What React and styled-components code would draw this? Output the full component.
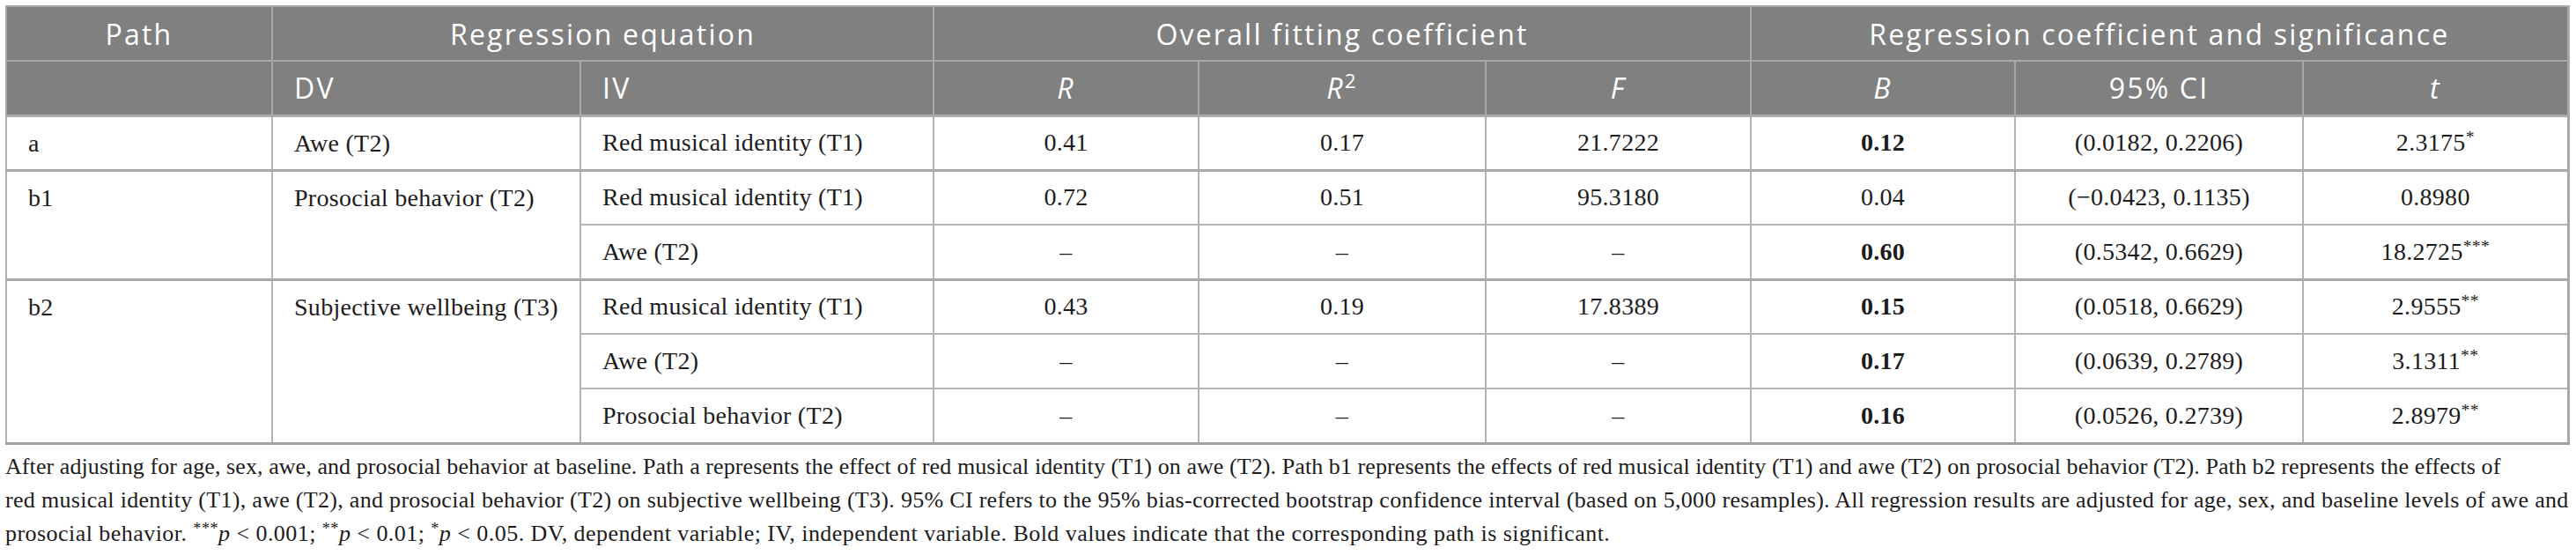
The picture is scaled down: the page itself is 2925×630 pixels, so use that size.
import styled, { createGlobalStyle } from "styled-components";

const GlobalStyle = createGlobalStyle`
  html, body {
    margin: 0;
    padding: 0;
    background: #ffffff;
  }
  body {
    font-family: "Liberation Serif", "Times New Roman", serif;
    color: #1d1b1c;
  }
`;

const widths = [302, 350, 401, 301, 326, 301, 300, 327, 301];

const rows = [
  {
    path: "a",
    dv: "Awe (T2)",
    items: [
      { iv: "Red musical identity (T1)", r: "0.41", r2: "0.17", f: "21.7222", b: "0.12", bold: true, ci: "(0.0182, 0.2206)", t: "2.3175", star: "*" },
    ],
  },
  {
    path: "b1",
    dv: "Prosocial behavior (T2)",
    items: [
      { iv: "Red musical identity (T1)", r: "0.72", r2: "0.51", f: "95.3180", b: "0.04", bold: false, ci: "(\u22120.0423, 0.1135)", t: "0.8980", star: "" },
      { iv: "Awe (T2)", r: "\u2013", r2: "\u2013", f: "\u2013", b: "0.60", bold: true, ci: "(0.5342, 0.6629)", t: "18.2725", star: "***" },
    ],
  },
  {
    path: "b2",
    dv: "Subjective wellbeing (T3)",
    items: [
      { iv: "Red musical identity (T1)", r: "0.43", r2: "0.19", f: "17.8389", b: "0.15", bold: true, ci: "(0.0518, 0.6629)", t: "2.9555", star: "**" },
      { iv: "Awe (T2)", r: "\u2013", r2: "\u2013", f: "\u2013", b: "0.17", bold: true, ci: "(0.0639, 0.2789)", t: "3.1311", star: "**" },
      { iv: "Prosocial behavior (T2)", r: "\u2013", r2: "\u2013", f: "\u2013", b: "0.16", bold: true, ci: "(0.0526, 0.2739)", t: "2.8979", star: "**" },
    ],
  },
];

function App() {
  return (
    <>
      <GlobalStyle />
      <Page>
        <Table>
          <colgroup>
            {widths.map((w, i) => (
              <col key={i} style={{ width: w }} />
            ))}
          </colgroup>
          <thead>
            <HeadRow>
              <HeadCell $align="center">Path</HeadCell>
              <HeadCell $align="center" colSpan={2}>
                Regression equation
              </HeadCell>
              <HeadCell $align="center" colSpan={3}>
                Overall fitting coefficient
              </HeadCell>
              <HeadCell $align="center" colSpan={3}>
                Regression coefficient and significance
              </HeadCell>
            </HeadRow>
            <HeadRow>
              <HeadCell />
              <HeadCell>DV</HeadCell>
              <HeadCell>IV</HeadCell>
              <HeadCell $align="center">
                <i>R</i>
              </HeadCell>
              <HeadCell $align="center">
                <i>R</i>
                <Sup>2</Sup>
              </HeadCell>
              <HeadCell $align="center">
                <i>F</i>
              </HeadCell>
              <HeadCell $align="center">
                <i>B</i>
              </HeadCell>
              <HeadCell $align="center">95% CI</HeadCell>
              <HeadCell $align="center">
                <i>t</i>
              </HeadCell>
            </HeadRow>
          </thead>
          {rows.map((group) => (
            <Group key={group.path}>
              {group.items.map((item, i) => (
                <BodyRow key={i}>
                  {i === 0 && (
                    <>
                      <Cell rowSpan={group.items.length} $top>
                        {group.path}
                      </Cell>
                      <Cell rowSpan={group.items.length} $top>
                        {group.dv}
                      </Cell>
                    </>
                  )}
                  <Cell>{item.iv}</Cell>
                  <Cell $align="center">{item.r}</Cell>
                  <Cell $align="center">{item.r2}</Cell>
                  <Cell $align="center">{item.f}</Cell>
                  <Cell $align="center" $bold={item.bold}>
                    {item.b}
                  </Cell>
                  <Cell $align="center">{item.ci}</Cell>
                  <Cell $align="center">
                    {item.t}
                    {item.star && <Star>{item.star}</Star>}
                  </Cell>
                </BodyRow>
              ))}
            </Group>
          ))}
        </Table>
        <Note>
          <Line $spacing={0.08}>
            After adjusting for age, sex, awe, and prosocial behavior at baseline. Path a represents the effect of red
            musical identity (T1) on awe (T2). Path b1 represents the effects of red musical identity (T1) and awe (T2) on
            prosocial behavior (T2). Path b2 represents the effects of
          </Line>
          <Line $spacing={0.3}>
            red musical identity (T1), awe (T2), and prosocial behavior (T2) on subjective wellbeing (T3). 95% CI refers
            to the 95% bias-corrected bootstrap confidence interval (based on 5,000 resamples). All regression results are
            adjusted for age, sex, and baseline levels of awe and
          </Line>
          <Line $spacing={0.45}>
            prosocial behavior. <Star>***</Star>
            <i>p</i> &lt; 0.001; <Star>**</Star>
            <i>p</i> &lt; 0.01; <Star>*</Star>
            <i>p</i> &lt; 0.05. DV, dependent variable; IV, independent variable. Bold values indicate that the
            corresponding path is significant.
          </Line>
        </Note>
      </Page>
    </>
  );
}

export default App;

const Page = styled.div`
  padding: 6px 8px 0 6px;
  width: 2911px;
`;

const Table = styled.table`
  width: 2911px;
  table-layout: fixed;
  border-collapse: collapse;
  border: 2px solid #a9a9a9;
  border-bottom: 3px solid #a0a0a0;
  border-right: 3px solid #a9a9a9;
`;

const HeadRow = styled.tr`
  background: #808080;
  height: 62px;
`;

const BodyRow = styled.tr`
  height: 62px;
`;

const HeadCell = styled.th`
  border: 2px solid #a8a8a8;
  padding: 0 24px;
  text-align: ${(p) => p.$align || "left"};
  font-family: "Open Sans", "Noto Sans", sans-serif;
  font-weight: 400;
  font-size: 32px;
  letter-spacing: 2.2px;
  color: #ffffff;
  vertical-align: middle;
  white-space: nowrap;
`;

const Sup = styled.sup`
  font-size: 0.7em;
  font-style: normal;
  vertical-align: 0.55em;
  line-height: 0;
`;

const Group = styled.tbody`
  border-top: 3px solid #a9a9a9;
`;

const Cell = styled.td`
  border: 2px solid #b3b3b3;
  padding: ${(p) => (p.$top ? "14px 24px 0" : "0 24px")};
  vertical-align: ${(p) => (p.$top ? "top" : "middle")};
  text-align: ${(p) => p.$align || "left"};
  font-size: 28px;
  letter-spacing: 0.3px;
  font-weight: ${(p) => (p.$bold ? 700 : 400)};
  white-space: nowrap;
`;

const Star = styled.sup`
  font-size: 0.7em;
  vertical-align: 0.45em;
  line-height: 0;
`;

const Note = styled.div`
  margin: 6px 0 0;
  display: flex;
  flex-direction: column;
  font-size: 26px;
  line-height: 38px;
  color: #1d1b1c;
`;

const Line = styled.span`
  display: block;
  white-space: nowrap;
  letter-spacing: ${(p) => p.$spacing}px;
`;
